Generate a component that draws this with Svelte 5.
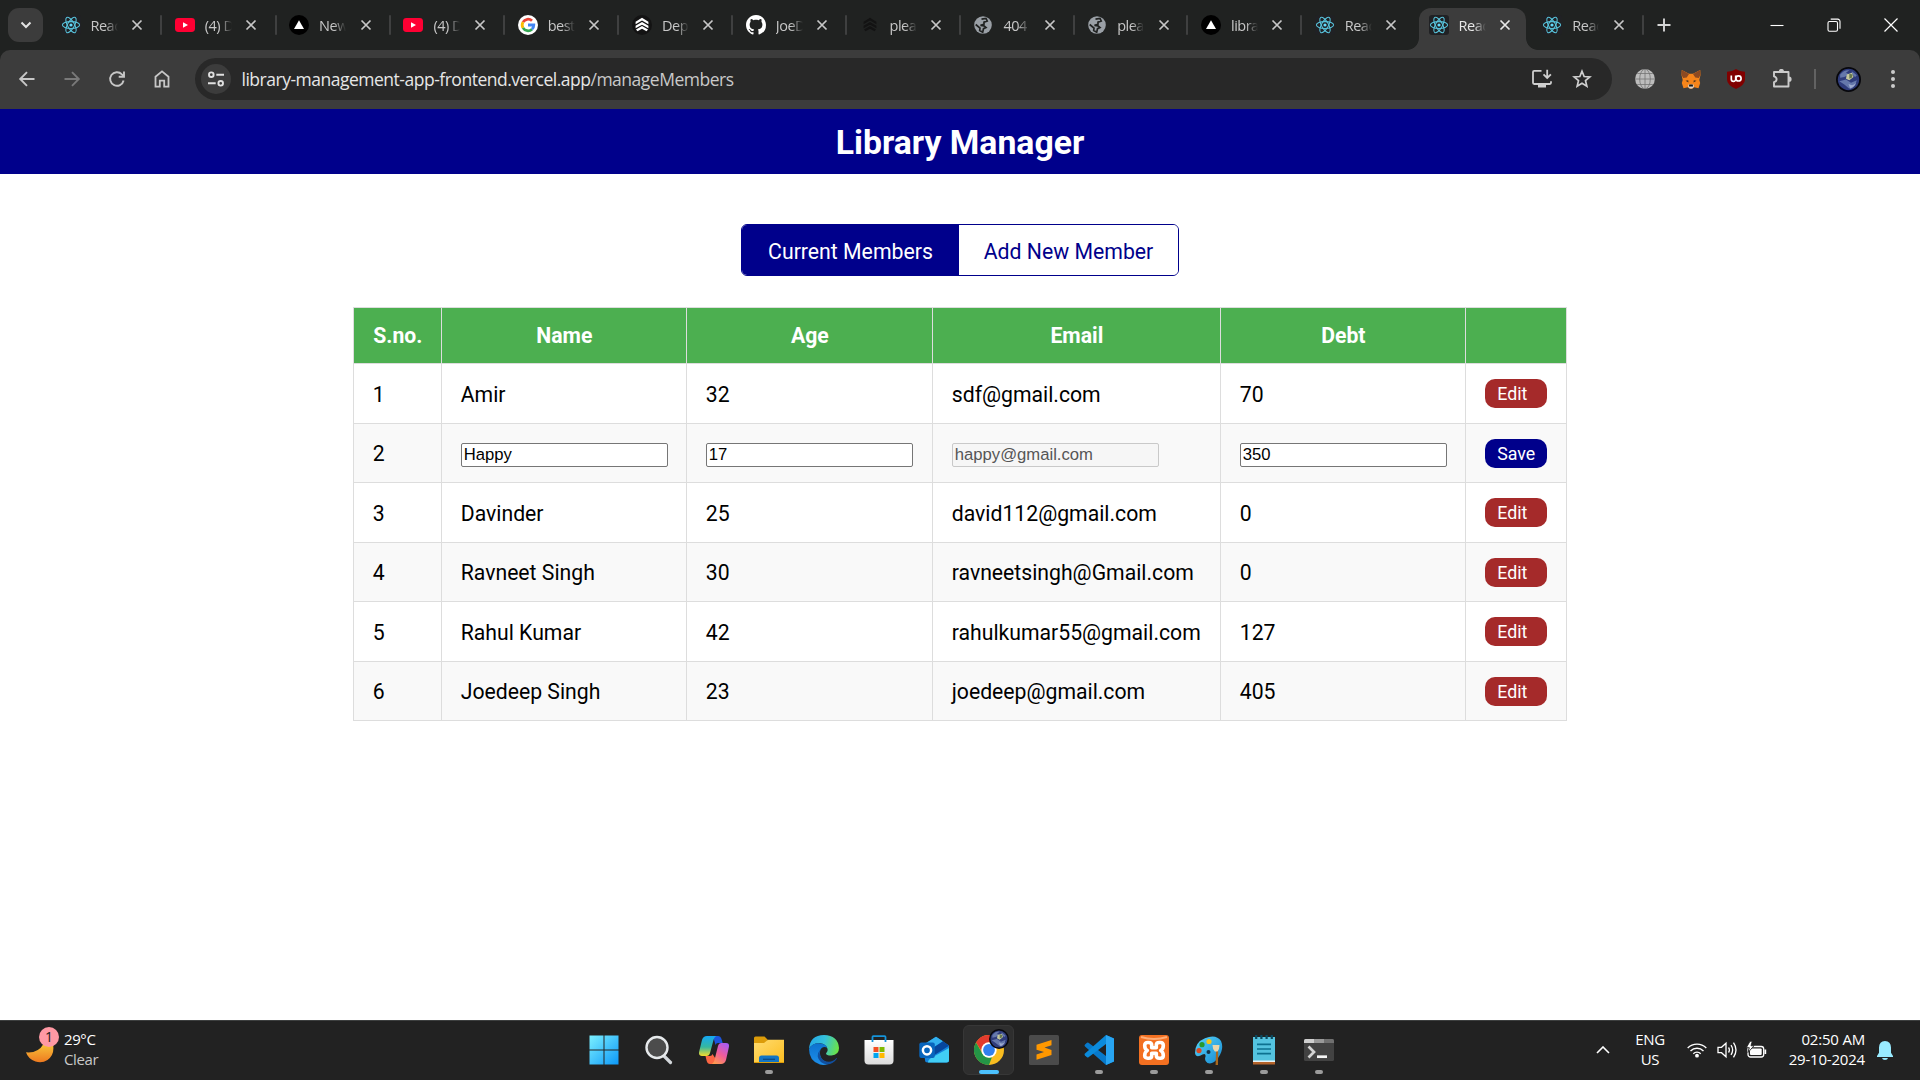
<script>
  const tabs = [
    { icon: 'react', label: 'Reac' },
    { icon: 'youtube', label: '(4) D' },
    { icon: 'vercel', label: 'New' },
    { icon: 'youtube', label: '(4) D' },
    { icon: 'google', label: 'best' },
    { icon: 'render', label: 'Dep' },
    { icon: 'github', label: 'JoeD' },
    { icon: 'renderDark', label: 'plea' },
    { icon: 'globe', label: '404' },
    { icon: 'globe', label: 'plea' },
    { icon: 'vercel', label: 'libra' },
    { icon: 'react', label: 'Reac' },
    { icon: 'react', label: 'Reac', active: true },
    { icon: 'react', label: 'Reac' },
  ];

  const members = [
    { name: 'Amir', age: 32, email: 'sdf@gmail.com', debt: 70 },
    { name: 'Happy', age: 17, email: 'happy@gmail.com', debt: 350, editing: true },
    { name: 'Davinder', age: 25, email: 'david112@gmail.com', debt: 0 },
    { name: 'Ravneet Singh', age: 30, email: 'ravneetsingh@Gmail.com', debt: 0 },
    { name: 'Rahul Kumar', age: 42, email: 'rahulkumar55@gmail.com', debt: 127 },
    { name: 'Joedeep Singh', age: 23, email: 'joedeep@gmail.com', debt: 405 },
  ];

  const apps = [
    { id: 'start' },
    { id: 'search' },
    { id: 'copilot' },
    { id: 'files', open: true },
    { id: 'edge' },
    { id: 'store' },
    { id: 'outlook' },
    { id: 'chrome', current: true },
    { id: 'sublime' },
    { id: 'vscode', open: true },
    { id: 'xampp', open: true },
    { id: 'paint', open: true },
    { id: 'notepad', open: true },
    { id: 'terminal', open: true },
  ];
</script>

{#snippet favicon(kind)}
  <svg class="favicon" viewBox="0 0 20 20">
    {#if kind === 'react'}
      <rect width="20" height="20" rx="3" fill="#202124" />
      <g fill="none" stroke="#58c4dc" stroke-width="1.05">
        <ellipse cx="10" cy="10" rx="8.6" ry="3.4" />
        <ellipse cx="10" cy="10" rx="8.6" ry="3.4" transform="rotate(60 10 10)" />
        <ellipse cx="10" cy="10" rx="8.6" ry="3.4" transform="rotate(120 10 10)" />
      </g>
      <circle cx="10" cy="10" r="1.6" fill="#61dafb" />
    {:else if kind === 'youtube'}
      <rect x="0" y="3" width="20" height="14" rx="3.4" fill="#ff0033" />
      <path d="M8 7.2v5.6l5-2.8z" fill="#fff" />
    {:else if kind === 'vercel'}
      <circle cx="10" cy="10" r="10" fill="#000" />
      <path d="M10 5.2 15 14H5z" fill="#fff" />
    {:else if kind === 'google'}
      <circle cx="10" cy="10" r="10" fill="#fff" />
      <g fill="none" stroke-width="2.8">
        <path d="M5 7.1A5.8 5.8 0 0 1 14 5.8" stroke="#ea4335" />
        <path d="M5 12.9a5.8 5.8 0 0 1 0-5.8" stroke="#fbbc04" />
        <path d="M14 14.2a5.8 5.8 0 0 1-9-1.3" stroke="#34a853" />
        <path d="M10 10h5.8a5.8 5.8 0 0 1-1.9 4.3" stroke="#4285f4" />
      </g>
    {:else if kind === 'render' || kind === 'renderDark'}
      {#if kind === 'render'}<circle cx="10" cy="10" r="10" fill="#131313" />{/if}
      <g fill={kind === 'render' ? '#fff' : '#131313'}>
        <path d="m10 2.800 6.400 4v2.500L10 5.600 3.600 9.300V6.800z" />
        <path d="m10 7 6.400 3.800v2.400L10 9.700l-6.400 3.500v-2.400z" />
        <path d="m10 11.100 6 3.500-1.500 1.600L10 13.700l-4.500 2.500L4 14.600z" />
      </g>
    {:else if kind === 'github'}
      <path
        fill="#fff"
        transform="scale(1.25)"
        d="M8 0C3.580 0 0 3.580 0 8c0 3.540 2.290 6.530 5.470 7.590.4.070.550-.170.550-.380 0-.190-.010-.820-.010-1.490-2.010.370-2.530-.490-2.690-.940-.090-.230-.480-.940-.820-1.130-.280-.150-.680-.520-.010-.530.630-.010 1.080.580 1.230.820.720 1.210 1.870.870 2.330.660.070-.520.280-.870.510-1.070-1.780-.2-3.640-.890-3.640-3.950 0-.870.310-1.590.820-2.150-.080-.2-.360-1.020.080-2.120 0 0 .670-.210 2.200.820.640-.180 1.320-.270 2-.270s1.360.090 2 .270c1.530-1.040 2.200-.820 2.200-.820.440 1.100.160 1.920.080 2.120.510.560.820 1.270.820 2.150 0 3.070-1.870 3.750-3.650 3.950.290.250.540.730.540 1.480 0 1.070-.010 1.930-.010 2.200 0 .210.150.460.550.380A8.010 8.010 0 0 0 16 8c0-4.420-3.580-8-8-8z"
      />
    {:else}
      <circle cx="10" cy="10" r="8.8" fill="#9aa0a6" />
      <path d="M8.500 4.200 13 3.500 14.200 6 11 7.200v2L7.500 10.300l3.500.5 2 1.700-2.500 1.200-.8 3.500-3-1.700.3-2.500-4.300-3.500" fill="none" stroke="#202221" stroke-width="1.700" />
    {/if}
  </svg>
{/snippet}

{#snippet earth()}
  <circle cx="15" cy="15" r="15" fill="#07070c" />
  <circle cx="15" cy="15" r="12.800" fill="#2f3c7c" />
  <path d="M5 9q5-6 11-5l-4 3 4 2-6 3-5 1zM19 5l6 5-2 2-4-3zM4 17l8-2 6 4 7-3-2 6-7 4-6-5z" fill="#8298c4" opacity=".65" />
  <path d="m13 9 6-2 2 5-5 4-4-2z" fill="#c5c8a0" />
  <path d="m16 8 4 1-1 4-3 1z" fill="#66784f" />
  <path d="M15 20q5 4 9-1-2 6-7 7z" fill="#c3cde6" opacity=".6" />
{/snippet}

<div class="screen">
  <div class="browser">
    <header class="tabstrip">
      <button class="tabsearch" aria-label="Search tabs">
        <svg width="12" height="12" viewBox="0 0 12 12"><path d="m1.500 3.500 4.500 4.500 4.500-4.500" fill="none" stroke="#e3e3e3" stroke-width="2" /></svg>
      </button>
      <div class="tabs">
        {#each tabs as tab, i}
          <div class="tab" class:wide={i < 5} class:active={tab.active} class:before={tabs[i + 1]?.active}>
            {@render favicon(tab.icon)}
            <span class="tablabel">{tab.label}</span>
            <svg class="close" viewBox="0 0 12 12"><path d="m1.500 1.500 9 9m0-9-9 9" stroke="currentColor" stroke-width="1.700" /></svg>
          </div>
        {/each}
      </div>
      <svg class="plus" viewBox="0 0 14 14"><path d="M7 .5v13M.5 7h13" stroke="#d5d5d5" stroke-width="1.900" /></svg>
      <div class="window">
        <svg viewBox="0 0 14 14"><path d="M.5 7.500h13" stroke="#fff" stroke-width="1.100" /></svg>
        <svg viewBox="0 0 14 14"><rect x="1" y="3.500" width="9.500" height="9.700" rx="1.500" fill="none" stroke="#fff" stroke-width="1.100" /><path d="M3.700 1.100h7a2.300 2.300 0 0 1 2.300 2.300v7.400" fill="none" stroke="#fff" stroke-width="1.100" /></svg>
        <svg viewBox="0 0 14 14"><path d="m.5.500 13 13m0-13-13 13" stroke="#fff" stroke-width="1.200" /></svg>
      </div>
    </header>

    <nav class="toolbar">
      <div class="navicons">
        <svg viewBox="0 0 20 20"><path d="M17.500 10h-14M10 3.200 3.200 10l6.800 6.800" fill="none" stroke="#c7c7c7" stroke-width="1.900" /></svg>
        <svg viewBox="0 0 20 20"><path d="M2.500 10h14M10 3.200l6.800 6.800-6.800 6.800" fill="none" stroke="#797979" stroke-width="1.900" /></svg>
        <svg viewBox="0 0 20 20"><path d="M16.600 11.500a6.800 6.800 0 1 1-1.700-6.200L17 7.400M17 2.500v5.300h-5.300" fill="none" stroke="#c7c7c7" stroke-width="1.900" /></svg>
        <svg viewBox="0 0 20 20"><path d="M3.500 17.600V7.700L10 2.400l6.500 5.300v9.900h-4.300v-6H7.800v6z" fill="none" stroke="#c7c7c7" stroke-width="1.800" /></svg>
      </div>
      <div class="address">
        <span class="site">
          <svg width="18" height="18" viewBox="0 0 18 18" fill="none" stroke="#e0e0e0" stroke-width="1.900"><circle cx="4.300" cy="4.700" r="2.300" /><path d="M9.300 4.700H17M1 13.300h7.700" /><circle cx="13.700" cy="13.300" r="2.300" /></svg>
        </span>
        <span class="url">library-management-app-frontend.vercel.app<span class="path">/manageMembers</span></span>
        <svg class="install" viewBox="0 0 22 20"><path d="M10.500 1.800H3.200Q2 1.800 2 3v10.800Q2 15 3.200 15h15.600q1.200 0 1.200-1.200V12.300M16.200.8v8M12.500 5.300l3.700 3.700 3.700-3.700" fill="none" stroke="#cfcfcf" stroke-width="1.800" /><path d="M7 15h8v3.500H7z" fill="#cfcfcf" /></svg>
        <svg class="star" viewBox="0 0 20 20"><path d="m10 2.200 2.150 5.300 5.700.45-4.350 3.700 1.350 5.600L10 14.200l-4.850 3.050 1.350-5.600-4.350-3.700 5.700-.45z" fill="none" stroke="#cfcfcf" stroke-width="1.700" /></svg>
      </div>
      <div class="extensions">
        <svg viewBox="0 0 20 20"><circle cx="10" cy="10" r="9.900" fill="#bdbdbd" /><g fill="none" stroke="#747474" stroke-width=".8"><path d="M10 0v20M0 10h20M2.200 4.500h15.600M2.200 15.500h15.600" /><ellipse cx="10" cy="10" rx="5.300" ry="9.900" /></g></svg>
        <svg viewBox="0 0 20 20"><path d="M.8 1 8 4.800h4L19.200 1l.3 5-1.200 5 .9 3-1.700 5.200-4.300-1-2 1.500H8.800l-2-1.500-4.300 1L.8 14l.9-3-1.200-5z" fill="#f6851b" /><path d="M.8 1 8 5 5.700 8.600l-3.500.3L.5 6zM19.200 1 12 5l2.300 3.600 3.500.3L19.500 6z" fill="#8d4a22" /><path d="m4.500 11.800 3 1.700-.3-2.300zM15.500 11.800l-3 1.700.3-2.300z" fill="#45301f" /><path d="m7.500 15.500-.5 2.300 1.800 1.700h2.400l1.800-1.700-.5-2.300z" fill="#d9d3cc" /><path d="M8.300 15.500h3.400l.4 2H7.900z" fill="#17181a" /></svg>
        <svg viewBox="0 0 20 20"><path d="M10 0q3.500 2.500 9 2.800v7.700q0 5.500-9 9.500-9-4-9-9.500V2.800Q6.500 2.500 10 0z" fill="#800000" /><g fill="none" stroke="#fff" stroke-width="1.700"><path d="M5.300 6.500v3.700a2.200 2.200 0 0 0 4.400 0V6.500" /><circle cx="12.500" cy="9.400" r="2.600" /></g></svg>
        <svg viewBox="0 0 20 20"><path d="M2 3h14.500v14.500H2v-4.300q2.600-.7 2.600-2.900T2 7.400z" fill="none" stroke="#cbcbcb" stroke-width="1.900" stroke-linejoin="round" /><path d="M6.800 2.500a2.600 2.600 0 0 1 5.200 0zM17 7.600a2.600 2.600 0 0 1 0 5.200z" fill="#cbcbcb" /></svg>
      </div>
      <span class="divider"></span>
      <svg class="profile" viewBox="0 0 30 30">{@render earth()}</svg>
      <svg class="menu" viewBox="0 0 6 20" fill="#cbcbcb"><circle cx="3" cy="3" r="2" /><circle cx="3" cy="10" r="2" /><circle cx="3" cy="17" r="2" /></svg>
    </nav>
  </div>

  <main class="page">
    <h1>Library Manager</h1>
    <div class="switch">
      <button class="selected">Current Members</button>
      <button>Add New Member</button>
    </div>
    <table>
      <colgroup><col class="c1" /><col class="c2" /><col class="c3" /><col class="c4" /><col class="c5" /><col class="c6" /></colgroup>
      <thead>
        <tr><th>S.no.</th><th>Name</th><th>Age</th><th>Email</th><th>Debt</th><th></th></tr>
      </thead>
      <tbody>
        {#each members as m, i}
          <tr>
            <td>{i + 1}</td>
            {#if m.editing}
              <td><input value={m.name} /></td>
              <td><input value={m.age} /></td>
              <td><input value={m.email} disabled /></td>
              <td><input value={m.debt} /></td>
              <td><button class="action save">Save</button></td>
            {:else}
              <td>{m.name}</td>
              <td>{m.age}</td>
              <td>{m.email}</td>
              <td>{m.debt}</td>
              <td><button class="action">Edit</button></td>
            {/if}
          </tr>
        {/each}
      </tbody>
    </table>
  </main>

  <footer class="taskbar">
    <div class="weather">
      <div class="moon">
        <svg width="28" height="20" viewBox="0 0 28 20"><defs><linearGradient id="moon" x1="0" y1="0" x2="0" y2="1"><stop offset="0" stop-color="#f8c43a" /><stop offset="1" stop-color="#ee7a20" /></linearGradient></defs><path d="M0 8.300Q12 9.500 17.500 0H27Q29 11 21.500 16 16 19.500 9.500 17.500 2 15 0 8.300z" fill="url(#moon)" /></svg>
        <span class="badge">1</span>
      </div>
      <div class="forecast"><span>29°C</span><span class="sky">Clear</span></div>
    </div>

    <div class="apps">
      {#each apps as app}
        <div class="app" class:current={app.current} class:open={app.open}>
          <svg class="appicon" viewBox="0 0 30 30">
            {#if app.id === 'start'}
              <defs><linearGradient id="win" x1="0" y1="0" x2="1" y2="1"><stop offset="0" stop-color="#7cf0ff" /><stop offset="1" stop-color="#0c98f8" /></linearGradient></defs>
              <path d="M.5.500h14v14H.5zM15.500.500h14v14h-14zM.5 15.500h14v14H.5zM15.500 15.500h14v14h-14z" fill="url(#win)" />
            {:else if app.id === 'search'}
              <path d="m19.500 20.500 7 7" stroke="#d3d7db" stroke-width="3.200" stroke-linecap="round" />
              <circle cx="13" cy="12.500" r="10.500" fill="#4c4c4c" stroke="#e6e9eb" stroke-width="2.400" />
            {:else if app.id === 'copilot'}
              <defs>
                <linearGradient id="cp1" x1="0" y1="0" x2="0" y2="1"><stop offset="0" stop-color="#15a8f4" /><stop offset=".55" stop-color="#35b7a0" /><stop offset="1" stop-color="#f5dd2c" /></linearGradient>
                <linearGradient id="cp2" x1=".8" y1="0" x2=".2" y2="1"><stop offset="0" stop-color="#a85cf5" /><stop offset=".5" stop-color="#f05c9b" /><stop offset="1" stop-color="#ff9c4b" /></linearGradient>
              </defs>
              <path d="M10 1h9q2.500 0 3.500 3l1.200 4H19q-2 0-2.500 2L14 1z" fill="#1c55dd" />
              <path d="M20 29h-9q-2.500 0-3.300-3l-1.200-5H11q2 0 2.500-2z" fill="#fb6643" />
              <path d="M8 1h10q-2.500.3-3.500 4l-3.500 13q-.8 3-3.500 3H3q-4 0-2.700-5L3 5q1.200-4 5-4z" fill="url(#cp1)" />
              <path d="M22 29H12q2.500-.3 3.500-4L19 11q.8-3 3.500-3H27q4 0 2.700 5L27 25q-1.200 4-5 4z" fill="url(#cp2)" />
            {:else if app.id === 'files'}
              <defs><linearGradient id="folder" x1="0" y1="0" x2="1" y2="1"><stop offset="0" stop-color="#ffdc70" /><stop offset="1" stop-color="#fcbd1f" /></linearGradient></defs>
              <path d="M0 3q0-1.500 1.500-1.500h9L14 5l-3 4H0z" fill="#dc9c09" />
              <path d="M0 8h10l4-3.300h16V28H0z" fill="url(#folder)" />
              <path d="M5 28v-5q0-2.500 2.500-2.500h15Q25 20.500 25 23v5z" fill="#1375c4" /><path d="M9 24.300h12" stroke="#0b4a87" stroke-width="1.300" /><path d="M0 27.500h30" stroke="#dc9c09" />
            {:else if app.id === 'edge'}
              <defs>
                <linearGradient id="e1" x1="0" y1=".3" x2="1" y2=".5"><stop offset="0" stop-color="#24a9e8" /><stop offset=".5" stop-color="#35c1da" /><stop offset="1" stop-color="#6be347" /></linearGradient>
                <linearGradient id="e2" x1="0" y1="0" x2="0" y2="1"><stop offset="0" stop-color="#0d72cf" /><stop offset="1" stop-color="#1d8fe9" /></linearGradient>
              </defs>
              <path d="M0 14Q1 0 15 0q14 .5 15 13 0 7-7.500 7.500-5 .2-5.500-2 2.300-1.800 1.600-4.500Q17 9 11 8.300 3 8 0 14z" fill="url(#e1)" />
              <path d="M0 14q3-6 10-5.700 6.500.4 8.300 4.200-5-2-7 2.500-2 9 6.700 12.500 1.700.7 1 1.500Q15 30.500 11 29.500 0 26 0 14z" fill="url(#e2)" />
              <path d="M11 15q-1.500 7 4 10.500 7 3.500 12.500-2.500.7-.4.300.7Q24.500 29 18 29.500 10 28 8.700 21.500 8.500 17.500 11 15z" fill="#114f9e" />
            {:else if app.id === 'store'}
              <defs><linearGradient id="bag" x1="0" y1="0" x2="0" y2="1"><stop offset="0" stop-color="#fff" /><stop offset="1" stop-color="#dcdcdc" /></linearGradient></defs>
              <path d="M.5 5h29v20.500q0 4-4 4h-21q-4 0-4-4z" fill="url(#bag)" />
              <path d="M8.500 7V2q0-.8.800-.8h11.400q.8 0 .8.800v5" fill="none" stroke="#1594da" stroke-width="1.800" />
              <path d="M9.500 12h5v5h-5z" fill="#f25022" /><path d="M15.500 12h5v5h-5z" fill="#7fba00" /><path d="M9.500 18h5v5h-5z" fill="#00a4ef" /><path d="M15.500 18h5v5h-5z" fill="#ffb900" />
            {:else if app.id === 'outlook'}
              <path d="M4 10 17 1.700 30 10.500V25q0 2.500-2.500 2.500h-19Q6 27.500 6 25z" fill="#1483dc" />
              <path d="m4 10 13-8.300 7 4.600L9 16z" fill="#32b1ef" /><path d="m24 6.300 6 4.500-15 9.400-5-4.800z" fill="#06469d" />
              <path d="m30 13-17 9.500q-4 2-4 5h18.500q2.500 0 2.500-2.500z" fill="#41cef5" />
              <rect x=".3" y="7.500" width="15.500" height="15.500" rx="2" fill="#0865bd" /><circle cx="8" cy="15.300" r="4.100" fill="none" stroke="#fff" stroke-width="2.500" />
            {:else if app.id === 'chrome'}
              <circle cx="15" cy="15" r="15" fill="#f9bd20" />
              <path d="M2 7.500A15 15 0 0 1 28 7.500H15A7.500 7.500 0 0 0 8 17z" fill="#e33b2e" />
              <path d="M2 7.500 8.500 18.700A7.500 7.500 0 0 0 18 21.900L15 30A15 15 0 0 1 2 7.500z" fill="#249546" />
              <circle cx="15" cy="15" r="7.700" fill="#fff" /><circle cx="15" cy="15" r="5.900" fill="#3180ee" />
            {:else if app.id === 'sublime'}
              <rect width="30" height="30" rx="1.500" fill="#4b4b4b" />
              <path d="m22.500 5-15 4.700v5l7.500 2.400-7.500 2.300v5.300l15-4.600v-5.200L15.500 12.500l7-2.200z" fill="#ff9800" />
            {:else if app.id === 'vscode'}
              <path d="M22 0 30 3.500v23L22 30 1 11.500Q0 10.500 1 9.500l2-1.700q.7-.5 1.500 0L22 21z" fill="#0879ca" />
              <path d="M22 0v9L4.500 22.200q-.8.500-1.500 0l-2-1.700q-1-1 0-2z" fill="#0b8bdc" /><path d="m22 0 8 3.500v23L22 30z" fill="#28a5f2" />
            {:else if app.id === 'xampp'}
              <rect width="30" height="30" rx="3" fill="#f37021" /><path d="M2 2q13 4 26 0" stroke="#ffae78" stroke-width="2" fill="none" />
              <path d="M12.700 12.800h4.600V10q0-2.500 3-2.500h1q3 0 3 3 0 3.500-2.600 5 2.600 1.500 2.600 5 0 2.700-3 2.700h-1q-3 0-3-2.500v-2.500h-4.600v2.500q0 2.500-3 2.500h-1q-3 0-3-2.700 0-3.500 2.600-5-2.600-1.500-2.600-5 0-3 3-3h1q3 0 3 2.500z" fill="none" stroke="#fff" stroke-width="3.600" stroke-linejoin="round" />
            {:else if app.id === 'paint'}
              <defs><linearGradient id="pal" x1="0" y1="0" x2="1" y2="1"><stop offset="0" stop-color="#58d4fa" /><stop offset="1" stop-color="#168bd2" /></linearGradient></defs>
              <path d="M11 3.200Q22-1.500 27 6q3.500 8-3 17-5 7-10.500 5-3.500-2-2-6.500.5-3.500-3-2Q2 23.500 1 18 1 7 11 3.200z" fill="url(#pal)" />
              <circle cx="15" cy="6.500" r="2.600" fill="#f4c51a" /><circle cx="8" cy="9.700" r="2.600" fill="#269b2c" /><circle cx="5" cy="15.600" r="2.600" fill="#dc4a22" /><circle cx="14.500" cy="17" r="2" fill="#13334a" />
              <path d="M22 16h2.200L24 30h-2.400z" fill="#a9681e" /><path d="M18.500 10h7q0 4-2 6.500h-2.700Q18.500 14 18.500 10z" fill="#ead5aa" />
            {:else if app.id === 'notepad'}
              <rect x="4" y="2" width="22" height="25" fill="#54c3df" /><path d="M4 27h22v2.500H4z" fill="#b4632a" /><path d="M4 25.500h22V27H4z" fill="#e7f3f7" />
              <path d="M7.200 0v4M12.400 0v4M17.600 0v4M22.800 0v4" stroke="#0b4a60" stroke-width="2.200" /><path d="M8 9.300h14M8 14h14M8 18.700h14" stroke="#0c7190" stroke-width="1.700" />
            {:else}
              <rect y="4" width="30" height="22" rx="1.500" fill="#424242" /><path d="M0 8V5.500Q0 4 1.500 4H10v4z" fill="#cfcfcf" /><path d="M10 4h10v4H10z" fill="#999" /><path d="M20 4h8.500Q30 4 30 5.500V8H20z" fill="#707070" />
              <path d="m4.500 11.500 5.500 5.500-5.500 5.500" fill="none" stroke="#d3d3d3" stroke-width="2.700" /><path d="M13 21.700h10" stroke="#f5f5f5" stroke-width="2.700" />
            {/if}
          </svg>
          {#if app.current}<svg class="appbadge" viewBox="0 0 30 30">{@render earth()}</svg>{/if}
        </div>
      {/each}
    </div>

    <div class="tray">
      <svg class="chevron" viewBox="0 0 14 8"><path d="m1 7 6-6 6 6" fill="none" stroke="#fff" stroke-width="1.600" /></svg>
      <div class="lang"><span>ENG</span><span>US</span></div>
      <svg class="wifi" viewBox="0 0 20 16" fill="none" stroke="#fff" stroke-width="1.400"><path d="M.7 6a13.200 13.200 0 0 1 18.600 0M3.500 8.900a9.200 9.200 0 0 1 13 0M6.300 11.700a5.200 5.200 0 0 1 7.400 0" /><circle cx="10" cy="13.700" r="1.200" fill="#fff" /></svg>
      <svg class="sound" viewBox="0 0 20 18" fill="none" stroke="#fff" stroke-width="1.300"><path d="M1 6.300h3.500l4.500-4v13.400l-4.500-4H1z" /><path d="M11.500 6.500q1.800 2.500 0 5M14 4.200q3.300 4.800 0 9.600M16.500 1.700q5 7.300 0 14.600" /></svg>
      <svg class="battery" viewBox="0 0 21 18"><rect x="2" y="5.500" width="15.700" height="10.500" rx="2.500" fill="none" stroke="#fff" stroke-width="1.300" /><rect x="4" y="7.500" width="11.700" height="6.500" rx="1" fill="#fff" /><path d="M18.500 8.500h1.700v4.500h-1.700z" fill="#fff" /><path d="M4 .2.3 6.700h3L2 11.500l6-6.800H5L6.300.200z" fill="#fff" stroke="#222" stroke-width=".9" /></svg>
      <div class="clock"><span>02:50 AM</span><span>29-10-2024</span></div>
      <svg class="bell" viewBox="0 0 16 19"><path d="M8 0q5.800.3 6 6.500v5.200l2 3.300v1H0v-1l2-3.300V6.500Q2.200.3 8 0zM5 17h6q-.5 2-3 2t-3-2z" fill="#99ebff" /></svg>
    </div>
  </footer>
</div>

<style>
  :global(body) { margin: 0; }
  .screen, .screen * { box-sizing: border-box; }
  .screen {
    width: 1920px;
    height: 1080px;
    display: flex;
    flex-direction: column;
    overflow: hidden;
    background: #fff;
    font-family: Roboto, sans-serif;
  }
  svg { display: block; flex: none; }
  button { border: 0; padding: 0; font-family: inherit; }

  .browser { flex: none; background: #202221; font-family: "Open Sans", sans-serif; }
  .tabstrip { height: 50px; display: flex; align-items: center; padding-left: 8px; }
  .tabsearch {
    width: 35px;
    height: 34px;
    border-radius: 11px;
    background: #3c3c3c;
    display: grid;
    place-items: center;
  }
  .tabs { display: flex; align-self: flex-end; height: 42px; margin-left: 4px; }
  .tab {
    width: 113.8px;
    height: 42px;
    display: flex;
    align-items: center;
    padding: 0 0 8px 13.500px;
    color: #c7c7c7;
    position: relative;
  }
  .tab.wide { width: 114.300px; }
  .tab > * { position: relative; z-index: 1; }
  .tab::after {
    content: "";
    position: absolute;
    right: -1px;
    top: 7px;
    width: 2px;
    height: 20px;
    border-radius: 1px;
    background: #3f4040;
  }
  .tab.before::after { display: none; }
  .tab.active { color: #e8e8e8; }
  .tab.active::before {
    content: "";
    position: absolute;
    left: 4px;
    right: 3px;
    top: 0;
    bottom: 0;
    border-radius: 12px 12px 0 0;
    background: #3c3c3c;
  }
  /* Flared feet that join the active tab to the toolbar */
  .tab.active::after {
    left: -8px;
    right: -9px;
    top: auto;
    bottom: 0;
    width: auto;
    height: 12px;
    border-radius: 0;
    background:
      radial-gradient(circle at 0 0, transparent 11.500px, #3c3c3c 12.300px) left / 12px 12px no-repeat,
      radial-gradient(circle at 100% 0, transparent 11.500px, #3c3c3c 12.300px) right / 12px 12px no-repeat;
  }
  .favicon { width: 20px; height: 20px; }
  .tablabel {
    width: 27px;
    margin: 1px 0 0 10px;
    white-space: nowrap;
    font-size: 14.500px;
    letter-spacing: -0.500px;
    line-height: 20px;
    mask-image: linear-gradient(90deg, #000 55%, transparent 100%);
  }
  .close { width: 12px; height: 12px; margin-left: 13.500px; }
  .plus { width: 14px; height: 14px; margin-left: 14px; }
  .window { margin-left: auto; display: flex; gap: 43px; padding-right: 22px; }
  .window svg { width: 14px; height: 14px; }

  .toolbar {
    height: 59px;
    display: flex;
    align-items: center;
    background: #3c3c3c;
    border-radius: 10px 10px 0 0;
    padding: 0 0 1px 17px;
  }
  .navicons { display: flex; gap: 25px; }
  .navicons svg { width: 20px; height: 20px; }
  .address {
    width: 1416.500px;
    height: 42px;
    margin-left: 23px;
    padding: 0 19.500px 0 6px;
    border-radius: 21px;
    background: #282828;
    display: flex;
    align-items: center;
  }
  .site {
    width: 30px;
    height: 30px;
    border-radius: 50%;
    background: #3c3c3c;
    display: grid;
    place-items: center;
  }
  .url {
    margin-left: 10.500px;
    flex: 1;
    font-size: 17.500px;
    letter-spacing: -0.490px;
    color: #e6e6e6;
    white-space: nowrap;
  }
  .path { color: #c9c9c9; }
  .install { width: 22px; height: 20px; }
  .star { width: 20px; height: 20px; margin-left: 19px; }
  .extensions { display: flex; gap: 25.500px; margin-left: 23.500px; }
  .extensions svg { width: 20px; height: 20px; }
  .divider { width: 2px; height: 20px; margin-left: 22px; background: #626262; }
  .profile { width: 25px; height: 25px; margin-left: 20px; }
  .menu { width: 6px; height: 20px; margin-left: 29px; }

  .page { flex: 1; display: flex; flex-direction: column; align-items: center; }
  h1 {
    width: 100%;
    height: 65px;
    margin: 0;
    background: #00008b;
    color: #fff;
    text-align: center;
    font-size: 33.750px;
    font-weight: 700;
    line-height: 67px;
  }
  .switch {
    width: 438px;
    height: 52px;
    margin-top: 50px;
    display: grid;
    grid-template-columns: 217px 1fr;
    border: 1px solid #00008b;
    border-radius: 6px;
    overflow: hidden;
  }
  .switch button { padding-top: 2px; background: #fff; color: #00008b; font-size: 21.250px; }
  .switch .selected { background: #00008b; color: #fff; }

  table {
    width: 1213px;
    margin-top: 31px;
    border-collapse: collapse;
    table-layout: fixed;
    font-size: 21.200px;
    color: #000;
  }
  .c1 { width: 88px; }
  .c2 { width: 245px; }
  .c3 { width: 246px; }
  .c4 { width: 288px; }
  .c5 { width: 245px; }
  .c6 { width: 101px; }
  th, td { border: 1px solid #ddd; padding: 0 18px 0 18.750px; text-align: left; white-space: nowrap; }
  th { height: 56px; background: #4caf50; color: #fff; text-align: center; font-weight: 700; }
  td { height: 59.500px; padding-top: 2px; }
  tbody tr:nth-child(even) { background: #f9f9f9; }
  input {
    display: block;
    width: 207px;
    height: 24px;
    margin-top: 3px;
    padding: 1px 2px;
    border: 1px solid #767676;
    border-radius: 2px;
    background: #fff;
    color: #000;
    font: 16.667px "Liberation Sans", sans-serif;
  }
  input:disabled { border-color: #c9c9c9; background: #f6f6f6; color: #555; }
  .action {
    display: block;
    width: 62px;
    height: 29px;
    margin-top: -1px;
    padding-left: 12.500px;
    border-radius: 10px;
    background: #a52a2a;
    color: #fff;
    font-size: 17.800px;
    text-align: left;
  }
  .save { background: #00008b; }

  .taskbar {
    height: 60px;
    flex: none;
    display: grid;
    grid-template-columns: 576px 770px 1fr;
    align-items: center;
    padding-bottom: 1px;
    background: #222;
    border-top: 1px solid #3d3f3f;
    color: #fff;
    font-family: "Open Sans", sans-serif;
    font-size: 15px;
    line-height: 20px;
  }
  .weather { display: flex; align-items: center; padding-left: 26px; }
  .moon { position: relative; padding-top: 8px; }
  .badge {
    position: absolute;
    left: 13px;
    top: -9px;
    width: 20px;
    height: 20px;
    border-radius: 50%;
    background: #ff99a4;
    color: #1a1a1a;
    text-align: center;
    font-size: 14px;
    line-height: 20px;
  }
  .forecast { display: flex; flex-direction: column; margin-left: 10px; padding-bottom: 3px; letter-spacing: -0.400px; }
  .sky { color: #c8c8c8; }
  .apps { display: flex; }
  .app {
    width: 55px;
    height: 50px;
    display: grid;
    place-items: center;
    position: relative;
  }
  .app.current { width: 51px; margin: 0 2px; border-radius: 6px; background: #2e2e2e; border: 1px solid #373737; }
  .appicon { width: 30px; height: 30px; }
  .appbadge { position: absolute; width: 20px; height: 20px; left: 25px; top: 3px; }
  .app.open::after, .app.current::after {
    content: "";
    position: absolute;
    bottom: 1px;
    width: 8px;
    height: 4px;
    border-radius: 2px;
    background: #9b9b9b;
  }
  .app.current::after { width: 20px; bottom: 0; background: #4cc2ff; }
  .tray { display: flex; align-items: center; justify-content: flex-end; padding-right: 27px; }
  .chevron { width: 14px; height: 8px; }
  .lang { width: 40px; margin-left: 20px; padding-bottom: 2px; display: flex; flex-direction: column; align-items: center; letter-spacing: -0.300px; }
  .wifi { width: 20px; height: 16px; margin-left: 17px; }
  .sound { width: 20px; height: 18px; margin-left: 10px; }
  .battery { width: 21px; height: 18px; margin-left: 9px; }
  .clock { width: 88px; margin-left: 10px; padding-bottom: 3px; display: flex; flex-direction: column; align-items: flex-end; letter-spacing: -0.200px; white-space: nowrap; }
  .bell { width: 16px; height: 19px; margin-left: 12px; }
</style>
